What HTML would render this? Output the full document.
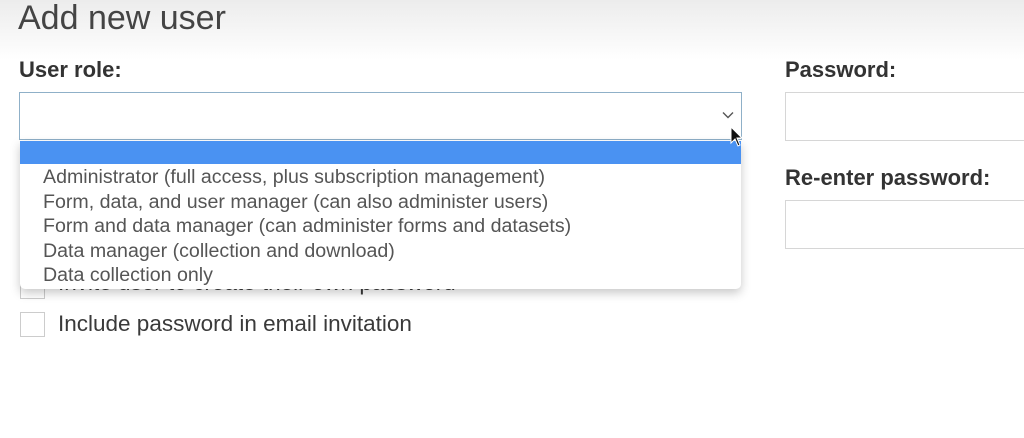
<!DOCTYPE html>
<html><head><style>
body{margin:0;width:1024px;height:438px;overflow:hidden;background:#fff;font-family:"Liberation Sans",sans-serif;color:#3a3a3a;position:relative}
.bg{position:absolute;left:0;top:0;width:1024px;height:60px;background:linear-gradient(#ececec,#fff)}
.a{position:absolute;white-space:nowrap}
.h{left:18px;top:-1px;font-size:34px;color:#444}
.lbl{font-size:22px;font-weight:bold;color:#333}
.box{position:absolute;background:#fff;border:1px solid #d6d6d6}
.dd{position:absolute;left:20px;top:141px;width:721px;height:148px;background:#fff;border-radius:0 0 5px 5px;box-shadow:0 4px 10px rgba(0,0,0,.22)}
.opt{position:absolute;left:23px;font-size:19.6px;color:#555;line-height:22px}
.cb{position:absolute;width:23px;height:23px;border:1px solid #ccc;background:#fff}
</style></head><body>
<div class="bg"></div>
<div class="a h">Add new user</div>
<div class="a lbl" style="left:19px;top:57px">User role:</div>
<div class="a lbl" style="left:785px;top:57px">Password:</div>
<div class="box" style="left:785px;top:92px;width:250px;height:47px"></div>
<div class="a lbl" style="left:785px;top:165px">Re-enter password:</div>
<div class="box" style="left:785px;top:200px;width:250px;height:47px"></div>
<div class="box" style="left:19px;top:92px;width:721px;height:46px;border-color:#8fb0c8"></div>
<svg style="position:absolute;left:722px;top:111px" width="12" height="8"><path d="M1 1.5L6 6.5L11 1.5" fill="none" stroke="#555" stroke-width="1.4"/></svg>
<div class="cb" style="left:20px;top:274px"></div>
<div class="a" style="left:58px;top:270px;font-size:22.5px">Invite user to create their own password</div>
<div class="cb" style="left:20px;top:312px"></div>
<div class="a" style="left:58px;top:311px;font-size:22.5px">Include password in email invitation</div>
<div class="dd">
<div style="position:absolute;left:0;top:0;width:721px;height:23px;background:#4a92f2"></div>
<div class="opt" style="top:25px">Administrator (full access, plus subscription management)</div>
<div class="opt" style="top:50px">Form, data, and user manager (can also administer users)</div>
<div class="opt" style="top:74px">Form and data manager (can administer forms and datasets)</div>
<div class="opt" style="top:99px">Data manager (collection and download)</div>
<div class="opt" style="top:123px">Data collection only</div>
</div>
<svg style="position:absolute;left:730px;top:126px" width="14" height="22"><path d="M1 1L1 17L5 13L8 20L10 19L7 12L12 12Z" fill="#111" stroke="#fff" stroke-width="1"/></svg>
</body></html>
